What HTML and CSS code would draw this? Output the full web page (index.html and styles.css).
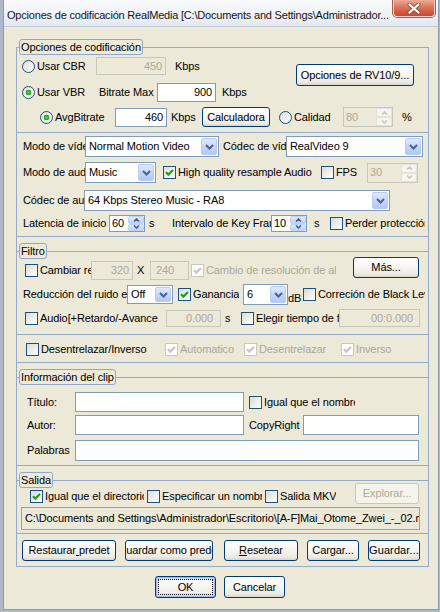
FILE: index.html
```html
<!DOCTYPE html>
<html lang="es">
<head>
<meta charset="utf-8">
<title>Opciones de codificación RealMedia</title>
<link rel="stylesheet" href="styles.css">
</head>
<body>
<div class="window">
  <div class="titlebar">
    <span class="title">Opciones de codificación RealMedia [C:\Documents and Settings\Administrador...</span>
    <span class="close"><svg width="14" height="11" viewBox="0 0 14 11"><path d="M2.5 1.5 L11.5 9.5 M11.5 1.5 L2.5 9.5" stroke="#8E5447" stroke-width="4" stroke-linecap="round" fill="none"/><path d="M2.5 1.5 L11.5 9.5 M11.5 1.5 L2.5 9.5" stroke="#FFFFFF" stroke-width="2.2" stroke-linecap="round" fill="none"/></svg></span>
  </div>
  <div class="client">
    <fieldset class="outer">
      <legend>Opciones de codificación</legend>

      <div class="sec sec-a">
        <div class="a-top">
          <div class="a-left">
            <div class="row ra1">
              <span class="chk"><span class="rb"></span><span class="tx">Usar CBR</span></span>
              <span class="ed dis num w70 h18">450</span>
              <span class="tx">Kbps</span>
            </div>
            <div class="row ra2">
              <span class="chk"><span class="rb on"></span><span class="tx">Usar VBR</span></span>
              <span class="tx">Bitrate Max</span>
              <span class="ed num w59 h19">900</span>
              <span class="tx">Kbps</span>
            </div>
          </div>
          <span class="btn rv"><span class="bt">Opciones de RV10/9...</span></span>
        </div>
        <div class="row ra3">
          <span class="chk"><span class="rb on"></span><span class="tx">AvgBitrate</span></span>
          <span class="ed num w52 h19">460</span>
          <span class="tx">Kbps</span>
          <span class="btn w68 h20"><span class="bt">Calculadora</span></span>
          <span class="chk"><span class="rb"></span><span class="tx">Calidad</span></span>
          <span class="spn dis w50 h20"><span class="st">80</span><span class="sb"><span><svg width="7" height="4" viewBox="0 0 7 4"><path d="M1 3.5 L3.5 1 L6 3.5" fill="none" stroke-width="1.6"/></svg></span><span><svg width="7" height="4" viewBox="0 0 7 4"><path d="M1 0.5 L3.5 3 L6 0.5" fill="none" stroke-width="1.6"/></svg></span></span></span>
          <span class="tx">%</span>
        </div>
      </div>

      <div class="sec sec-b">
        <div class="row rb1">
          <span class="tx">Modo de vídeo</span>
          <span class="cmb w134 h21"><span class="ct">Normal Motion Video</span><span class="dd"><svg width="9" height="6" viewBox="0 0 9 6"><path d="M1 1 L4.5 4.5 L8 1" fill="none" stroke="#4D6185" stroke-width="2"/></svg></span></span>
          <span class="tx">Códec de vídeo</span>
          <span class="cmb w137 h21"><span class="ct">RealVideo 9</span><span class="dd"><svg width="9" height="6" viewBox="0 0 9 6"><path d="M1 1 L4.5 4.5 L8 1" fill="none" stroke="#4D6185" stroke-width="2"/></svg></span></span>
        </div>
        <div class="row rb2">
          <span class="tx">Modo de audio</span>
          <span class="cmb w71 h21"><span class="ct">Music</span><span class="dd"><svg width="9" height="6" viewBox="0 0 9 6"><path d="M1 1 L4.5 4.5 L8 1" fill="none" stroke="#4D6185" stroke-width="2"/></svg></span></span>
          <span class="chk"><span class="cb"><svg width="11" height="11" viewBox="0 0 11 11"><path d="M2 5.2 L4.4 7.6 L9 3" fill="none" stroke-width="2.3"/></svg></span><span class="tx">High quality resample Audio</span></span>
          <span class="chk"><span class="cb"></span><span class="tx">FPS</span></span>
          <span class="spn dis w51 h20"><span class="st">30</span><span class="sb"><span><svg width="7" height="4" viewBox="0 0 7 4"><path d="M1 3.5 L3.5 1 L6 3.5" fill="none" stroke-width="1.6"/></svg></span><span><svg width="7" height="4" viewBox="0 0 7 4"><path d="M1 0.5 L3.5 3 L6 0.5" fill="none" stroke-width="1.6"/></svg></span></span></span>
        </div>
        <div class="row rb3">
          <span class="tx">Códec de audio</span>
          <span class="cmb w306 h21"><span class="ct">64 Kbps Stereo Music - RA8</span><span class="dd"><svg width="9" height="6" viewBox="0 0 9 6"><path d="M1 1 L4.5 4.5 L8 1" fill="none" stroke="#4D6185" stroke-width="2"/></svg></span></span>
        </div>
        <div class="row rb4">
          <span class="tx">Latencia de inicio</span>
          <span class="spn w36 h17"><span class="st">60</span><span class="sb"><span><svg width="7" height="4" viewBox="0 0 7 4"><path d="M1 3.5 L3.5 1 L6 3.5" fill="none" stroke-width="1.6"/></svg></span><span><svg width="7" height="4" viewBox="0 0 7 4"><path d="M1 0.5 L3.5 3 L6 0.5" fill="none" stroke-width="1.6"/></svg></span></span></span>
          <span class="tx">s</span>
          <span class="tx">Intervalo de Key Frame</span>
          <span class="spn w36 h17"><span class="st">10</span><span class="sb"><span><svg width="7" height="4" viewBox="0 0 7 4"><path d="M1 3.5 L3.5 1 L6 3.5" fill="none" stroke-width="1.6"/></svg></span><span><svg width="7" height="4" viewBox="0 0 7 4"><path d="M1 0.5 L3.5 3 L6 0.5" fill="none" stroke-width="1.6"/></svg></span></span></span>
          <span class="tx">s</span>
          <span class="chk"><span class="cb"></span><span class="tx">Perder protección</span></span>
        </div>
      </div>

      <fieldset class="inner filtro">
        <legend>Filtro</legend>
        <div class="row rf1">
          <span class="chk"><span class="cb"></span><span class="tx">Cambiar resolución</span></span>
          <span class="ed dis num w42 h19">320</span>
          <span class="tx">X</span>
          <span class="ed dis w39 h19 pl5">240</span>
          <span class="chk dis w145"><span class="cb"><svg width="11" height="11" viewBox="0 0 11 11"><path d="M2 5.2 L4.4 7.6 L9 3" fill="none" stroke-width="2.3"/></svg></span><span class="tx">Cambio de resolución de altura</span></span>
          <span class="btn mas"><span class="bt">Más...</span></span>
        </div>
        <div class="row rf2">
          <span class="tx">Reducción del ruido en</span>
          <span class="cmb w46 h19"><span class="ct">Off</span><span class="dd"><svg width="9" height="6" viewBox="0 0 9 6"><path d="M1 1 L4.5 4.5 L8 1" fill="none" stroke="#4D6185" stroke-width="2"/></svg></span></span>
          <span class="chk"><span class="cb"><svg width="11" height="11" viewBox="0 0 11 11"><path d="M2 5.2 L4.4 7.6 L9 3" fill="none" stroke-width="2.3"/></svg></span><span class="tx">Ganancia</span></span>
          <span class="cmb w45 h21"><span class="ct">6</span><span class="dd"><svg width="9" height="6" viewBox="0 0 9 6"><path d="M1 1 L4.5 4.5 L8 1" fill="none" stroke="#4D6185" stroke-width="2"/></svg></span></span>
          <span class="tx db">dB</span>
          <span class="chk"><span class="cb"></span><span class="tx">Correción de Black Level</span></span>
        </div>
        <div class="row rf3">
          <span class="chk"><span class="cb"></span><span class="tx">Audio[+Retardo/-Avance</span></span>
          <span class="ed dis num w55 h17 pr7">0.000</span>
          <span class="tx">s</span>
          <span class="chk"><span class="cb"></span><span class="tx">Elegir tiempo de fin</span></span>
          <span class="ed dis num w81 h18 pr6">00:0.000</span>
        </div>
      </fieldset>

      <div class="sec deint">
        <div class="row rd">
          <span class="chk"><span class="cb"></span><span class="tx">Desentrelazar/Inverso</span></span>
          <span class="chk dis"><span class="cb"><svg width="11" height="11" viewBox="0 0 11 11"><path d="M2 5.2 L4.4 7.6 L9 3" fill="none" stroke-width="2.3"/></svg></span><span class="tx">Automatico</span></span>
          <span class="chk dis"><span class="cb"><svg width="11" height="11" viewBox="0 0 11 11"><path d="M2 5.2 L4.4 7.6 L9 3" fill="none" stroke-width="2.3"/></svg></span><span class="tx">Desentrelazar</span></span>
          <span class="chk dis"><span class="cb"><svg width="11" height="11" viewBox="0 0 11 11"><path d="M2 5.2 L4.4 7.6 L9 3" fill="none" stroke-width="2.3"/></svg></span><span class="tx">Inverso</span></span>
        </div>
      </div>

      <fieldset class="inner clip">
        <legend>Información del clip</legend>
        <div class="row rc1">
          <span class="tx">Título:</span>
          <span class="ed w169 h20"></span>
          <span class="chk w106"><span class="cb"></span><span class="tx">Igual que el nombre</span></span>
        </div>
        <div class="row rc2">
          <span class="tx">Autor:</span>
          <span class="ed w169 h20"></span>
          <span class="tx">CopyRight</span>
          <span class="ed w116 h20"></span>
        </div>
        <div class="row rc3">
          <span class="tx">Palabras</span>
          <span class="ed w344 h21"></span>
        </div>
      </fieldset>

      <fieldset class="inner salida">
        <legend>Salida</legend>
        <div class="row rs">
          <span class="chk w114"><span class="cb"><svg width="11" height="11" viewBox="0 0 11 11"><path d="M2 5.2 L4.4 7.6 L9 3" fill="none" stroke-width="2.3"/></svg></span><span class="tx">Igual que el directorio</span></span>
          <span class="chk w115"><span class="cb"></span><span class="tx">Especificar un nombre</span></span>
          <span class="chk"><span class="cb"></span><span class="tx">Salida MKV</span></span>
          <span class="btn dis explorar"><span class="bt">Explorar...</span></span>
        </div>
        <div class="ed ro path">C:\Documents and Settings\Administrador\Escritorio\[A-F]Mai_Otome_Zwei_-_02.mkv</div>
      </fieldset>

      <div class="btns">
        <span class="btn w94 h21"><span class="bt">Restaurar<u> </u>predet</span></span>
        <span class="btn w88 h21"><span class="bt">Guardar como predet</span></span>
        <span class="btn w74 h21"><span class="bt"><u>R</u>esetear</span></span>
        <span class="btn w52 h21"><span class="bt">Cargar...</span></span>
        <span class="btn w52 h21"><span class="bt wide">Guardar...</span></span>
      </div>
    </fieldset>

    <div class="dlg">
      <span class="btn def w61 h22"><span class="bt">OK</span></span>
      <span class="btn w61 h22"><span class="bt">Cancelar</span></span>
    </div>
  </div>
</div>
</body>
</html>
```
FILE: styles.css
```css
* { box-sizing: border-box; }
html, body { margin: 0; padding: 0; }
body {
  width: 440px;
  height: 612px;
  overflow: hidden;
  background: #AEB8C8;
  font-family: "Liberation Sans", Arial, sans-serif;
  font-size: 11px;
  line-height: 13px;
  letter-spacing: -0.1px;
  color: #000;
}

.window {
  margin-left: 3px;
  width: 436px;
  height: 610px;
  background: #ECE9D8;
  border: 1px solid #8D9AAF;
  border-top: 0;
  display: flex;
  flex-direction: column;
}

.titlebar {
  flex: none;
  height: 27px;
  display: flex;
  align-items: flex-start;
  padding-left: 3px;
  background: linear-gradient(180deg, #FAFBFD 0%, #EFF2F7 55%, #E3E8F0 100%);
  border-bottom: 1px solid #C2CAD7;
}
.title {
  flex: 1;
  min-width: 0;
  margin-top: 8px;
  line-height: 14px;
  letter-spacing: -0.2px;
  white-space: nowrap;
  overflow: hidden;
  color: #151515;
}
.close {
  flex: none;
  width: 42px;
  height: 17px;
  margin-right: 3px;
  display: flex;
  align-items: center;
  justify-content: center;
  border: 1px solid #F0CFC6;
  border-top: 0;
  border-radius: 0 0 4px 4px;
  background: linear-gradient(180deg, #EEAA96 0%, #DD735B 45%, #C8472F 100%);
  box-shadow: 0 0 0 1px #A95A4C;
}

.client {
  flex: 1;
  display: flex;
  flex-direction: column;
  padding: 12px 0 0 12px;
}

fieldset {
  margin: 0;
  padding: 0;
  min-width: 0;
}
legend {
  margin-left: 2px;
  padding: 0 1px;
  height: 16px;
  line-height: 14px;
  border: 1px solid #8FA7CA;
  border-radius: 3px;
  background: #ECE9D8;
  white-space: nowrap;
}
.outer {
  width: 413px;
  border: 1px solid #93AACB;
}
.inner {
  border: 0;
  border-top: 1px solid #93AACB;
  border-bottom: 1px solid #93AACB;
}

.sec { border-bottom: 1px solid #93AACB; }

/* generic row: grid whose column widths are the distances between controls */
.row {
  display: grid;
  align-items: center;
}
.tx { white-space: nowrap; overflow: hidden; }

/* ---- section A ---- */
.sec-a { height: 78px; padding-top: 2px; }
.a-top { display: flex; }
.a-left { width: 279px; flex: none; }
.rv { margin-top: 7px; width: 118px; height: 22px; }
.ra1 { height: 18px; padding-left: 5px; grid-template-columns: 74px 79px auto; }
.ra2 { height: 19px; margin-top: 8px; padding-left: 5px; grid-template-columns: 77px 58px 65px auto; }
.ra3 { height: 20px; margin-top: 5px; padding-left: 23px; grid-template-columns: 75px 56px 31px 77px 64px 59px auto; }

/* ---- section B ---- */
.sec-b { height: 104px; padding-top: 3px; }
.rb1 { height: 21px; padding-left: 6px; grid-template-columns: 62px 138px 63px auto; }
.rb2 { height: 21px; margin-top: 5px; padding-left: 6px; grid-template-columns: 62px 78px 158px 46px auto; }
.rb3 { height: 21px; margin-top: 7px; padding-left: 6px; grid-template-columns: 61px auto; }
.rb4 { height: 17px; margin-top: 4px; padding-left: 6px; grid-template-columns: 86px 40px 23px 99px 43px 16px 95px; }

/* ---- Filtro ---- */
.filtro { margin-top: 6px; height: 92px; }
.rf1 { height: 21px; margin-top: 1px; padding-left: 8px; grid-template-columns: 66px 46px 13px 41px 162px auto; }
.rf2 { height: 21px; margin-top: 3px; padding-left: 6px; grid-template-columns: 104px 51px 65px 45px 15px 122px; }
.rf3 { height: 18px; margin-top: 4px; padding-left: 8px; grid-template-columns: 141px 59px 16px 98px auto; }
.mas { align-self: start; margin-top: -3px; width: 66px; height: 21px; }
.db { align-self: end; overflow: visible; }

/* ---- deinterlace ---- */
.deint { height: 28px; padding-top: 8px; }
.rd { height: 13px; padding-left: 9px; grid-template-columns: 139px 79px 97px auto; }

/* ---- clip info ---- */
.clip { margin-top: 6px; height: 97px; }
.rc1 { height: 20px; margin-top: 7px; padding-left: 10px; grid-template-columns: 48px 174px 108px; }
.rc2 { height: 20px; margin-top: 3px; padding-left: 10px; grid-template-columns: 48px 174px 54px auto; }
.rc3 { height: 21px; margin-top: 5px; padding-left: 10px; grid-template-columns: 48px auto; }

/* ---- Salida ---- */
.salida { margin-top: 6px; height: 62px; }
.rs { height: 15px; padding-left: 13px; grid-template-columns: 117px 118px 90px auto; }
.explorar { align-self: start; margin-top: -5px; width: 64px; height: 21px; }
.path {
  margin: 4px 0 0 4px;
  width: 399px;
  height: 23px;
  padding-left: 5px;
}

/* ---- bottom rows ---- */
.btns {
  height: 32px;
  padding: 6px 0 0 5px;
  display: grid;
  align-items: start;
  grid-template-columns: 103px 99px 83px 61px auto;
}
.dlg {
  display: flex;
  gap: 8px;
  margin-top: 9px;
  padding-left: 139px;
}

/* ---- controls ---- */
.chk {
  display: flex;
  align-items: center;
  gap: 2px;
  white-space: nowrap;
  overflow: hidden;
  min-width: 0;
}
.chk.dis { color: #ACA899; }

.cb, .rb {
  flex: none;
  width: 13px;
  height: 13px;
  border: 1px solid #1C5180;
  background: linear-gradient(135deg, #DCDCD7 0%, #F4F4F1 70%, #FFFFFF 100%);
  display: flex;
  align-items: center;
  justify-content: center;
}
.cb svg path { stroke: #21A121; }
.chk.dis .cb { border-color: #CAC8BB; background: #FFFFFF; }
.chk.dis .cb svg path { stroke: #CAC8BB; }
.rb { border-radius: 50%; }
.rb.on {
  background:
    radial-gradient(circle at 50% 50%, #6FE06B 0, #2DB32A 1.6px, #1E991E 2.6px, rgba(30,153,30,0) 3.1px),
    linear-gradient(135deg, #DCDCD7 0%, #F4F4F1 70%, #FFFFFF 100%);
}

.ed {
  display: flex;
  align-items: center;
  padding: 0 3px;
  border: 1px solid #7F9DB9;
  background: #FFFFFF;
  white-space: nowrap;
  overflow: hidden;
}
.ed.num { justify-content: flex-end; }
.ed.dis { border-color: #C9C7BA; background: #ECE9D8; color: #ACA899; }
.ed.ro { background: #ECE9D8; border-color: #8FA4C0; }
.pl5 { padding-left: 5px; }
.pr7 { padding-right: 7px; }
.pr6 { padding-right: 6px; }

.cmb {
  display: flex;
  padding: 1px;
  border: 1px solid #7F9DB9;
  background: #FFFFFF;
}
.ct {
  flex: 1;
  min-width: 0;
  align-self: center;
  padding-left: 2px;
  white-space: nowrap;
  overflow: hidden;
}
.dd {
  flex: none;
  width: 16px;
  border: 1px solid #B7CBF5;
  border-radius: 2px;
  background: linear-gradient(180deg, #E0E9FD 0%, #C6D6FB 50%, #B3C8F7 100%);
  display: flex;
  align-items: center;
  justify-content: center;
}

.spn {
  display: flex;
  border: 1px solid #7F9DB9;
  background: #FFFFFF;
}
.st {
  flex: 1;
  min-width: 0;
  display: flex;
  align-items: center;
  padding: 0 2px;
  overflow: hidden;
}
.sb {
  flex: none;
  width: 16px;
  display: flex;
  flex-direction: column;
}
.sb > span {
  flex: 1;
  display: flex;
  align-items: center;
  justify-content: center;
  border: 1px solid #BFD0F6;
  border-radius: 2px;
  background: linear-gradient(180deg, #E1EAFD 0%, #BFD1FA 100%);
}
.sb svg path { stroke: #4D6185; }
.spn.dis { border-color: #C9C7BA; background: #ECE9D8; color: #ACA899; }
.spn.dis .sb > span { border-color: #E4E2D9; background: #F6F5F1; }
.spn.dis .sb svg path { stroke: #C9C7BA; }

.btn {
  display: flex;
  align-items: center;
  justify-content: center;
  white-space: nowrap;
  overflow: hidden;
  border: 1px solid #003C74;
  border-radius: 3px;
  background: linear-gradient(180deg, #FFFFFF 0%, #F7F6F2 45%, #ECEAE2 85%, #D9D4C8 100%);
}
.bt { flex: none; white-space: pre; }
.bt.wide { letter-spacing: 0.1px; }
.btn.dis { border-color: #C9C7BA; background: #F5F4EA; color: #ACA899; }
.btn.def {
  box-shadow: inset 0 0 0 1px #9DB9F1, inset 0 0 0 2px #CDDCFB;
  outline: 1px dotted #000;
  outline-offset: -4px;
}

/* sizes */
.w36 { width: 36px; } .w39 { width: 39px; } .w42 { width: 42px; } .w45 { width: 45px; }
.w46 { width: 46px; } .w50 { width: 50px; } .w51 { width: 51px; } .w52 { width: 52px; }
.w55 { width: 55px; } .w59 { width: 59px; } .w61 { width: 61px; } .w68 { width: 68px; }
.w70 { width: 70px; } .w71 { width: 71px; } .w74 { width: 74px; } .w81 { width: 81px; }
.w88 { width: 88px; } .w94 { width: 94px; } .w106 { width: 106px; } .w114 { width: 114px; }
.w115 { width: 115px; } .w116 { width: 116px; } .w134 { width: 134px; } .w137 { width: 137px; }
.w145 { width: 145px; } .w169 { width: 169px; } .w306 { width: 306px; } .w344 { width: 344px; }
.h17 { height: 17px; } .h18 { height: 18px; } .h19 { height: 19px; } .h20 { height: 20px; }
.h21 { height: 21px; } .h22 { height: 22px; }
```
